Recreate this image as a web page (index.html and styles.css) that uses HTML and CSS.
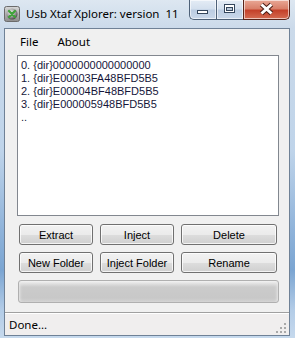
FILE: index.html
```html
<!DOCTYPE html>
<html lang="en">
<head>
    <meta charset="UTF-8">
    <title>Usb Xtaf Xplorer</title>
    <link rel="stylesheet" href="styles.css">
</head>
<body>
    <div class="window">
        <div class="titlebar">
            <svg class="app-icon" width="16" height="16" viewBox="0 0 16 16">
                <defs>
                    <linearGradient id="plate" x1="0" y1="0" x2="0" y2="1">
                        <stop offset="0" stop-color="#d8d8d8"/>
                        <stop offset="1" stop-color="#8c8c8c"/>
                    </linearGradient>
                    <radialGradient id="ball" cx="0.4" cy="0.35" r="0.7">
                        <stop offset="0" stop-color="#f2f2f2"/>
                        <stop offset="0.6" stop-color="#9a9a9a"/>
                        <stop offset="1" stop-color="#3c3c3c"/>
                    </radialGradient>
                </defs>
                <rect x="0.5" y="0.5" width="15" height="15" rx="2" fill="url(#plate)" stroke="#6b6b6b"/>
                <circle cx="8" cy="8" r="5.5" fill="url(#ball)"/>
                <path d="M5 5 L11 11 M11 5 L5 11" stroke="#3fa33a" stroke-width="2.2" stroke-linecap="round"/>
            </svg>
            <span class="title">Usb Xtaf Xplorer: version  11</span>
            <div class="caption">
                <div class="cap cap-min">
                    <svg width="27" height="20" viewBox="0 0 27 20">
                        <rect x="8.5" y="11.5" width="10" height="3" fill="#fff" stroke="#34465c"/>
                    </svg>
                </div>
                <div class="cap cap-max">
                    <svg width="27" height="20" viewBox="0 0 27 20">
                        <rect x="8.5" y="5.5" width="10" height="8" fill="#fff" stroke="#34465c"/>
                        <rect x="10.5" y="8.5" width="6" height="3" fill="#b9c8d9" stroke="#34465c"/>
                    </svg>
                </div>
                <div class="cap cap-close">
                    <svg width="47" height="20" viewBox="0 0 47 20">
                        <path d="M18.5 5.5 L28.5 14.5 M28.5 5.5 L18.5 14.5" stroke="#4a1e16" stroke-width="5"/>
                        <path d="M18.5 5.5 L28.5 14.5 M28.5 5.5 L18.5 14.5" stroke="#ffffff" stroke-width="3"/>
                    </svg>
                </div>
            </div>
        </div>

        <div class="client">
            <div class="menubar">
                <span class="menu-item">File</span>
                <span class="menu-item">About</span>
            </div>

            <ul class="listbox">
                <li>0. {dir}0000000000000000</li>
                <li>1. {dir}E00003FA48BFD5B5</li>
                <li>2. {dir}E00004BF48BFD5B5</li>
                <li>3. {dir}E000005948BFD5B5</li>
                <li>..</li>
            </ul>

            <div class="button-grid">
                <button>Extract</button>
                <button>Inject</button>
                <button>Delete</button>
                <button>New Folder</button>
                <button>Inject Folder</button>
                <button>Rename</button>
            </div>

            <div class="progress"></div>

            <div class="statusbar">
                <span class="status-text">Done...</span>
                <svg class="grip" width="11" height="11" viewBox="0 0 11 11">
                    <rect x="8" y="0" width="2" height="2" fill="#a9a9a9"/>
                    <rect x="4" y="4" width="2" height="2" fill="#a9a9a9"/>
                    <rect x="8" y="4" width="2" height="2" fill="#a9a9a9"/>
                    <rect x="0" y="8" width="2" height="2" fill="#a9a9a9"/>
                    <rect x="4" y="8" width="2" height="2" fill="#a9a9a9"/>
                    <rect x="8" y="8" width="2" height="2" fill="#a9a9a9"/>
                </svg>
            </div>
        </div>
    </div>
</body>
</html>
```

FILE: styles.css
```css
* {
    box-sizing: border-box;
}

body {
    margin: 0;
    width: 295px;
    height: 338px;
    overflow: hidden;
    font-family: 'Liberation Sans', Arial, sans-serif;
}

.window {
    width: 295px;
    height: 338px;
    display: flex;
    flex-direction: column;
    background: linear-gradient(180deg, #dde7f1 0, #cbdaea 28px, #bfd4ea 150px, #8fb3da 230px, #7ba5d2 270px, #b3cce7 310px, #c6d9ed 338px);
}

.titlebar {
    height: 28px;
    display: flex;
    align-items: flex-start;
    padding: 0 5px 0 4px;
}

.app-icon {
    margin-top: 6px;
    flex-shrink: 0;
}

.title {
    margin: 6px 0 0 6px;
    font-family: 'Noto Sans', sans-serif;
    font-size: 11.5px;
    line-height: 16px;
    white-space: pre;
    color: #000;
}

.caption {
    margin-left: auto;
    display: flex;
    height: 20px;
}

.cap {
    height: 20px;
    border: 1px solid #4e6178;
    border-top: none;
    box-shadow: inset 0 0 0 1px rgba(255, 255, 255, 0.6);
}

.cap svg {
    display: block;
    margin: -1px;
}

.cap-min {
    width: 27px;
    border-right: none;
    border-bottom-left-radius: 5px;
    background: linear-gradient(180deg, #e4ecf5 0, #d4e0ee 45%, #bccde2 55%, #c9d8ea 100%);
}

.cap-max {
    width: 27px;
    border-right: none;
    background: linear-gradient(180deg, #e4ecf5 0, #d4e0ee 45%, #bccde2 55%, #c9d8ea 100%);
}

.cap-close {
    width: 47px;
    border-color: #5a2419;
    border-bottom-right-radius: 5px;
    background: linear-gradient(180deg, #e9a896 0, #d9806a 45%, #c4412a 55%, #d56c52 100%);
}

.client {
    margin: 0 5px 0 4px;
    height: 308px;
    border: 1px solid #6f8196;
    background: #f0f0f0;
    display: flex;
    flex-direction: column;
}

.menubar {
    height: 24px;
    display: flex;
    align-items: center;
    padding-left: 15px;
    font-family: 'Noto Sans', sans-serif;
    font-size: 11.5px;
    color: #000;
}

.menu-item {
    margin-right: 19px;
}

.listbox {
    list-style: none;
    margin: 2px 0 0 12px;
    width: 262px;
    height: 161px;
    padding: 3px 0 0 3px;
    border: 1px solid #82878f;
    background: #ffffff;
    font-size: 11px;
    line-height: 13px;
    color: #16163a;
}

.button-grid {
    display: grid;
    grid-template-columns: 74px 74px 96px;
    grid-auto-rows: 21px;
    column-gap: 7px;
    row-gap: 7px;
    margin: 8px 0 0 14px;
}

.button-grid button {
    margin: 0;
    padding: 0;
    border: 1px solid #707070;
    border-radius: 3px;
    background: linear-gradient(180deg, #f2f2f2 0, #ebebeb 50%, #dddddd 51%, #cfcfcf 100%);
    box-shadow: inset 0 0 0 1px rgba(255, 255, 255, 0.75);
    font-family: 'Liberation Sans', Arial, sans-serif;
    font-size: 11px;
    color: #000;
}

.progress {
    margin: 7px 0 0 13px;
    width: 261px;
    height: 23px;
    border: 1px solid #b0b0b0;
    border-radius: 3px;
    background: linear-gradient(180deg, #f3f3f3 0, #dedede 3px, #cbcbcb 6px, #c8c8c8 80%, #d2d2d2 100%);
    box-shadow: inset 3px 0 3px -2px #e8e8e8, inset -3px 0 3px -2px #e8e8e8;
}

.statusbar {
    margin-top: auto;
    height: 23px;
    border-top: 1px solid #a0a0a0;
    box-shadow: inset 0 1px 0 #ffffff;
    background: #f0eeee;
    display: flex;
    align-items: center;
    padding: 1px 2px 0 4px;
    position: relative;
}

.status-text {
    font-family: 'Noto Sans', sans-serif;
    font-size: 11.5px;
    color: #000;
}

.grip {
    position: absolute;
    right: 2px;
    bottom: 1px;
}
```
